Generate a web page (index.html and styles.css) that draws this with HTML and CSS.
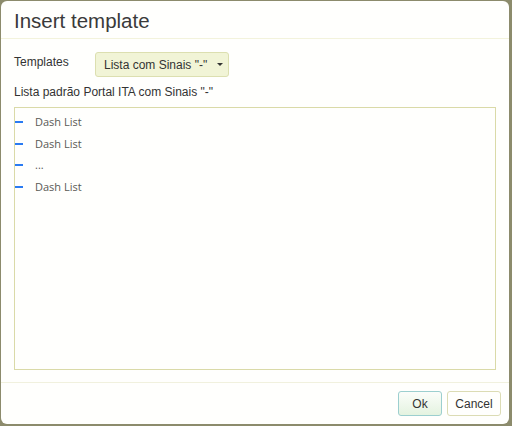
FILE: index.html
```html
<!DOCTYPE html>
<html>
<head>
<meta charset="utf-8">
<link rel="stylesheet" href="styles.css">
</head>
<body>
<div class="dialog">
  <div class="dlg-header">Insert template</div>
  <div class="dlg-body">
    <div class="row">
      <span class="label">Templates</span>
      <button class="select">Lista com Sinais "-" <span class="caret"></span></button>
    </div>
    <div class="desc">Lista padrão Portal ITA com Sinais "-"</div>
    <div class="preview">
      <ul class="dash">
        <li>Dash List</li>
        <li>Dash List</li>
        <li>...</li>
        <li>Dash List</li>
      </ul>
    </div>
  </div>
  <div class="dlg-footer">
    <button class="btn ok">Ok</button>
    <button class="btn cancel">Cancel</button>
  </div>
</div>
</body>
</html>
```
FILE: styles.css
```css
html, body { margin: 0; padding: 0; }
body {
  background: #8c8b6c;
  width: 512px;
  height: 426px;
  padding: 1px 0 0 1px;
  box-sizing: border-box;
  font-family: "Liberation Sans", Arial, sans-serif;
  color: #333;
}
.dialog {
  width: 508px;
  height: 423px;
  background: #fffffd;
  border-radius: 6px;
  display: flex;
  flex-direction: column;
}
.dlg-header {
  height: 38px;
  box-sizing: border-box;
  padding: 9px 0 0 13px;
  font-size: 20.5px;
  line-height: 22px;
  color: #3a3a3a;
  border-bottom: 1px solid #f3f3dc;
}
.dlg-body {
  flex: 1;
  padding: 13px 13px 12px 13px;
  display: flex;
  flex-direction: column;
}
.row {
  display: flex;
  align-items: center;
  height: 25px;
}
.label {
  font-size: 12px;
  width: 81px;
  margin-top: -5px;
}
.select {
  width: 134px;
  height: 25px;
  box-sizing: border-box;
  padding: 0 0 0 8px;
  background: #f1f4d6;
  border: 1px solid #dcdfb0;
  border-radius: 3px;
  font-family: "Liberation Sans", Arial, sans-serif;
  font-size: 12px;
  color: #333;
  display: flex;
  align-items: center;
  gap: 6px;
}
.caret {
  width: 0;
  height: 0;
  border-left: 3px solid transparent;
  border-right: 3px solid transparent;
  border-top: 3px solid #333;
  margin-left: 4px;
}
.desc {
  font-size: 12px;
  margin-top: 8px;
  height: 22px;
}
.preview {
  flex: 1;
  border: 1px solid #dadaa8;
}
.dash {
  list-style: none;
  margin: 6px 0 0 0;
  padding: 0;
  font-family: "Open Sans", sans-serif;
  font-size: 11px;
  color: #5a5a55;
}
.dash li {
  position: relative;
  height: 21.5px;
  line-height: 16px;
  padding-left: 20px;
}
.dash li::before {
  content: "";
  position: absolute;
  left: 0;
  top: 7px;
  width: 8px;
  height: 2px;
  background: #2a7bf2;
}
.dlg-footer {
  height: 42px;
  box-sizing: border-box;
  border-top: 1px solid #f1f1de;
  display: flex;
  justify-content: flex-end;
  align-items: flex-start;
  padding: 8px 8px 0 0;
  gap: 5px;
}
.btn {
  height: 25px;
  box-sizing: border-box;
  padding: 0;
  background: #fffffd;
  border: 1px solid #dcdcb4;
  border-radius: 3px;
  font-family: "Liberation Sans", Arial, sans-serif;
  font-size: 12px;
  color: #333;
}
.btn.ok {
  width: 44px;
  border-color: #9ccfcf;
  background: linear-gradient(#fbfdfa, #e4f3e0);
}
.btn.cancel { width: 54px; }
```
